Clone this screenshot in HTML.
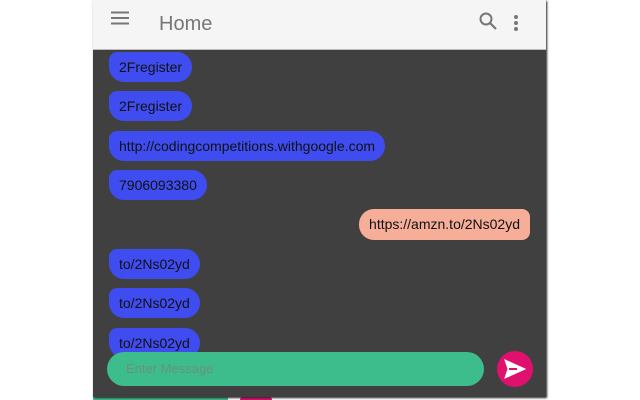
<!DOCTYPE html>
<html><head><style>
body{margin:0;width:640px;height:400px;background:#fff;position:relative;overflow:hidden;font-family:"Liberation Sans",sans-serif}
.panel{position:absolute;left:93px;top:0;width:453px;height:397px;background:#404040;box-shadow:1px 1px 2px #222}
.hdr{position:absolute;left:0;top:0;width:453px;height:49px;background:#f5f5f5;border-bottom:1px solid #bbb}
.b{position:absolute;height:30px;line-height:30px;font-size:14px;color:#111;padding:0 10px;box-sizing:border-box}
.l{left:16px;background:#3f4df0;border-radius:8px 15px 15px 15px}
.r{right:16px;background:#f6ae99;border-radius:15px 8px 8px 15px}
</style></head><body>
<div style="position:absolute;left:93px;top:397px;width:135px;height:3px;background:#3dbd8c"></div>
<div style="position:absolute;left:240px;top:396px;width:32px;height:4px;background:#e0106f;border-radius:8px 8px 0 0"></div>
<div class="panel">
<div class="hdr">
<svg style="position:absolute;left:18px;top:11px" width="18" height="14"><path d="M0 1.5H18M0 7H18M0 12.5H18" stroke="#777" stroke-width="2"/></svg>
<div style="position:absolute;left:66px;top:13px;font-size:20px;color:#777">Home</div>
<svg style="position:absolute;left:386px;top:12px" width="18" height="18"><circle cx="7" cy="7" r="5.5" stroke="#777" stroke-width="2" fill="none"/><path d="M11 11L17 17" stroke="#777" stroke-width="2.2"/></svg>
<svg style="position:absolute;left:420px;top:14px" width="6" height="18"><circle cx="3" cy="3" r="2" fill="#777"/><circle cx="3" cy="9" r="2" fill="#777"/><circle cx="3" cy="15" r="2" fill="#777"/></svg>
</div>
<div class="b l" style="top:52px">2Fregister</div>
<div class="b l" style="top:91px">2Fregister</div>
<div class="b l" style="top:131px">http://codingcompetitions.withgoogle.com</div>
<div class="b l" style="top:170px">7906093380</div>
<div class="b r" style="top:209px;height:31px;line-height:31px">https://amzn.to/2Ns02yd</div>
<div class="b l" style="top:249px">to/2Ns02yd</div>
<div class="b l" style="top:288px">to/2Ns02yd</div>
<div class="b l" style="top:328px">to/2Ns02yd</div>
<div style="position:absolute;left:14px;top:352px;width:377px;height:34px;border-radius:17px;background:#3dbd8c;color:#6a8f80;font-size:13px;line-height:34px;padding-left:19px;box-sizing:border-box">Enter Message</div>
<div style="position:absolute;left:404px;top:351px;width:36px;height:36px;border-radius:50%;background:#e0106f"></div>
<svg style="position:absolute;left:411px;top:359px" width="22" height="20"><path d="M1 1L21 10L1 19L4 10Z M4 10H12" fill="#fff" stroke="#fff" stroke-width="1"/><path d="M5 10H13" stroke="#e0106f" stroke-width="2"/></svg>
</div>
</body></html>
